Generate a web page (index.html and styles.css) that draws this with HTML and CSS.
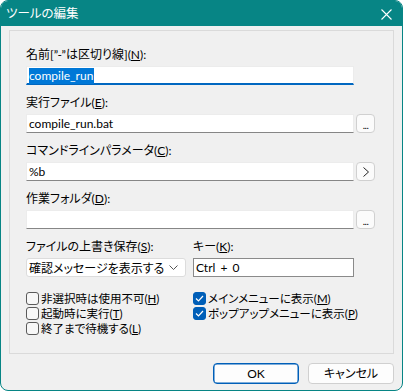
FILE: index.html
```html
<!DOCTYPE html>
<html lang="ja">
<head>
<meta charset="utf-8">
<link rel="stylesheet" href="styles.css">
</head>
<body>
<div class="window">
  <div class="titlebar">
    <span class="title">ツールの編集</span>
    <svg class="close" width="11" height="11" viewBox="0 0 11 11"><path d="M0.5 0.5 L10.5 10.5 M10.5 0.5 L0.5 10.5" stroke="#fff" stroke-width="1.1" fill="none"/></svg>
  </div>
  <div class="body">
    <div class="group">
      <div class="field">
        <div class="lbl">名前[”-”は区切り線](<u>N</u>):</div>
        <div class="row">
          <div class="input focus"><span class="sel">compile_run</span></div>
          <span class="spacer"></span>
        </div>
      </div>
      <div class="field">
        <div class="lbl">実行ファイル(<u>E</u>):</div>
        <div class="row">
          <div class="input">compile_run.bat</div>
          <div class="btn-sm"><span class="dots">...</span></div>
        </div>
      </div>
      <div class="field">
        <div class="lbl">コマンドラインパラメータ(<u>C</u>):</div>
        <div class="row">
          <div class="input">%b</div>
          <div class="btn-sm"><svg width="8" height="10" viewBox="0 0 8 10"><path d="M1.5 0.5 L6.5 5 L1.5 9.5" stroke="#222" stroke-width="1" fill="none"/></svg></div>
        </div>
      </div>
      <div class="field">
        <div class="lbl">作業フォルダ(<u>D</u>):</div>
        <div class="row">
          <div class="input"></div>
          <div class="btn-sm"><span class="dots">...</span></div>
        </div>
      </div>
      <div class="grid2">
        <div class="field-sm">
          <div class="lbl">ファイルの上書き保存(<u>S</u>):</div>
          <div class="combo">
            <span>確認メッセージを表示する</span>
            <svg width="9" height="6" viewBox="0 0 9 6"><path d="M0.5 0.5 L4.5 4.5 L8.5 0.5" stroke="#555" stroke-width="1" fill="none"/></svg>
          </div>
        </div>
        <div class="field-sm">
          <div class="lbl">キー(<u>K</u>):</div>
          <div class="input plain">Ctrl + 0</div>
        </div>
      </div>
      <div class="checks">
        <div class="col">
          <div class="chk"><span class="box"></span><span class="ct">非選択時は使用不可(<u>H</u>)</span></div>
          <div class="chk"><span class="box"></span><span class="ct">起動時に実行(<u>T</u>)</span></div>
          <div class="chk"><span class="box"></span><span class="ct">終了まで待機する(<u>L</u>)</span></div>
        </div>
        <div class="col">
          <div class="chk"><span class="box on"><svg width="9" height="7" viewBox="0 0 9 7"><path d="M1 3.5 L3.5 6 L8 1" stroke="#fff" stroke-width="1.2" fill="none"/></svg></span><span class="ct">メインメニューに表示(<u>M</u>)</span></div>
          <div class="chk"><span class="box on"><svg width="9" height="7" viewBox="0 0 9 7"><path d="M1 3.5 L3.5 6 L8 1" stroke="#fff" stroke-width="1.2" fill="none"/></svg></span><span class="ct">ポップアップメニューに表示(<u>P</u>)</span></div>
        </div>
      </div>
    </div>
    <div class="buttons">
      <div class="btn default">OK</div>
      <div class="btn">キャンセル</div>
    </div>
  </div>
</div>
</body>
</html>
```

FILE: styles.css
```css
* { box-sizing: border-box; }
html, body { margin: 0; padding: 0; background: #ffffff; }
body {
  font-family: Lato, "Noto Sans CJK JP", sans-serif;
  font-size: 12px;
  color: #000;
  font-feature-settings: "palt";
}
u { text-decoration: underline; text-underline-offset: 1px; }

.window {
  width: 403px;
  height: 391px;
  border: 1px solid #078585;
  border-radius: 8px;
  overflow: hidden;
  background: #f0f0f0;
  display: flex;
  flex-direction: column;
}
.titlebar {
  height: 25px;
  background: #078585;
  display: flex;
  align-items: center;
  justify-content: space-between;
  padding: 0 10px 0 5px;
  flex: none;
}
.title {
  color: #fff;
  font-size: 12.5px;
  line-height: 16px;
}
.close { display: block; margin-top: 1px; }

.body {
  flex: 1;
  padding: 4px 8px 0 8px;
  display: flex;
  flex-direction: column;
}
.group {
  width: 385px;
  height: 324px;
  border: 1px solid #dadada;
  padding: 16px 18px 0 16px;
}
.field { margin-bottom: 10px; }
.lbl {
  line-height: 16px;
  height: 16px;
  margin-bottom: 3px;
  white-space: nowrap;
}
.row {
  display: flex;
  align-items: stretch;
}
.input {
  flex: 1;
  height: 19px;
  background: #fff;
  border: 1px solid #ececec;
  border-bottom: 1px solid #868686;
  line-height: 17px;
  padding-left: 2px;
  white-space: nowrap;
}
.input.focus {
  border-bottom: 2px solid #0067c0;
}
.input.plain {
  flex: none;
  border: 1px solid #8a8a8a;
  word-spacing: 2px;
}
.sel {
  background: #0078d7;
  color: #fff;
  padding: 0 1px 1px 0;
}
.spacer { width: 21px; flex: none; }
.btn-sm {
  width: 19px;
  height: 19px;
  margin-left: 2px;
  flex: none;
  border: 1px solid #d0d0d0;
  border-radius: 4px;
  background: #fbfbfb;
  display: flex;
  align-items: center;
  justify-content: center;
}
.dots {
  font-size: 10px;
  line-height: 10px;
  letter-spacing: -0.5px;
  margin-top: 3px;
}

.grid2 {
  display: grid;
  grid-template-columns: 160px 161px;
  column-gap: 7px;
}
.field-sm { display: flex; flex-direction: column; }
.combo {
  height: 19px;
  background: #fff;
  border: 1px solid #dcdcdc;
  border-radius: 3px;
  display: flex;
  align-items: center;
  justify-content: space-between;
  padding: 0 7px 0 2px;
  white-space: nowrap;
}

.checks {
  margin-top: 14px;
  display: grid;
  grid-template-columns: 160px 161px;
  column-gap: 7px;
}
.col { display: flex; flex-direction: column; }
.chk {
  height: 15px;
  display: flex;
  align-items: center;
  gap: 2px;
  white-space: nowrap;
}
.ct {
  font-size: 11.5px;
  line-height: 14px;
}
.box {
  width: 13px;
  height: 13px;
  border: 1px solid #5a5a5a;
  border-radius: 3px;
  background: #f7f7f7;
  flex: none;
  display: flex;
  align-items: center;
  justify-content: center;
}
.box.on {
  background: #005fb8;
  border-color: #005fb8;
}

.buttons {
  display: flex;
  justify-content: flex-end;
  gap: 9px;
  margin-top: 9px;
}
.btn {
  width: 86px;
  height: 21px;
  border: 1px solid #d0d0d0;
  border-radius: 4px;
  background: #fdfdfd;
  display: flex;
  align-items: center;
  justify-content: center;
  line-height: 16px;
}
.btn.default {
  border: 1px solid #005fb8;
  box-shadow: inset 0 0 0 0.5px #005fb8;
}
```
